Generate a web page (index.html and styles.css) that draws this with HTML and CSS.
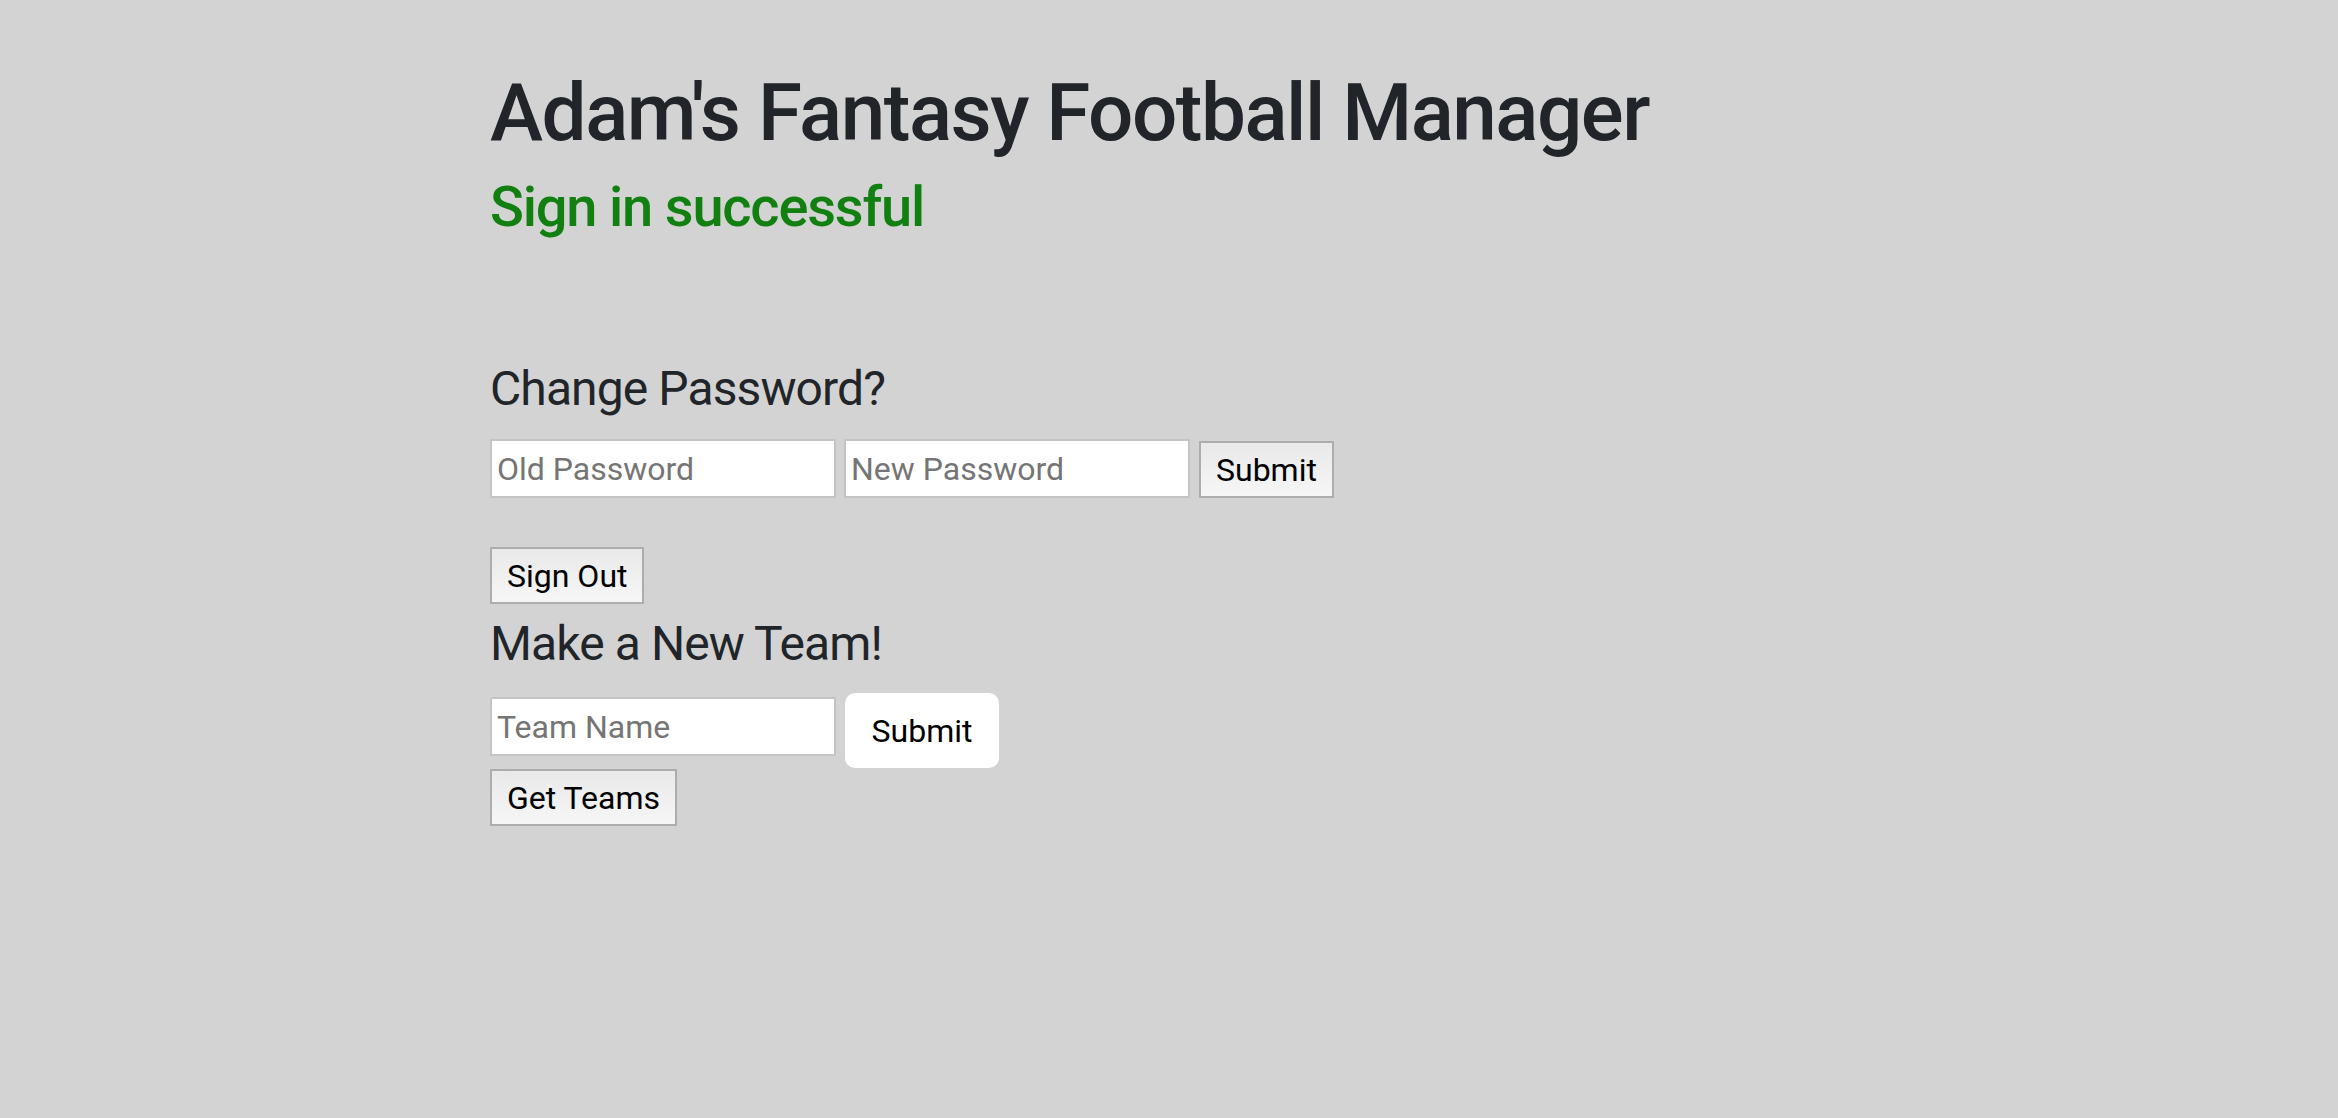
FILE: index.html
```html
<!DOCTYPE html>
<html lang="en">
<head>
<meta charset="utf-8">
<title>Adam's Fantasy Football Manager</title>
<link rel="stylesheet" href="styles.css">
</head>
<body>
<main class="page">
  <h1 class="title">Adam's Fantasy Football Manager</h1>
  <h3 class="status">Sign in successful</h3>

  <h4 class="section-title section-title--first">Change Password?</h4>
  <form class="row row--password">
    <input class="field" type="password" placeholder="Old Password">
    <input class="field" type="password" placeholder="New Password">
    <button class="btn" type="button">Submit</button>
  </form>

  <div class="signout-wrap">
    <button class="btn" type="button">Sign Out</button>
  </div>

  <h4 class="section-title section-title--team">Make a New Team!</h4>
  <form class="row row--team">
    <input class="field field--team" type="text" placeholder="Team Name">
    <button class="btn-white" type="button">Submit</button>
  </form>

  <div class="getteams-wrap">
    <button class="btn" type="button">Get Teams</button>
  </div>
</main>
</body>
</html>
```

FILE: styles.css
```css
html, body {
  margin: 0;
  padding: 0;
  background: #d3d3d3;
}

body {
  font-family: Roboto, "Noto Sans", "Liberation Sans", sans-serif;
  color: #212529;
  height: 1118px;
  overflow: hidden;
}

.page {
  padding: 65px 0 0 490px;
}

.title {
  margin: 0;
  font-size: 80px;
  line-height: 96px;
  font-weight: 500;
  letter-spacing: -1.5px;
}

.status {
  margin: 13px 0 0;
  font-size: 56px;
  line-height: 67px;
  font-weight: 500;
  color: #118011;
  letter-spacing: -1.2px;
}

.section-title {
  margin: 0;
  font-size: 48px;
  line-height: 58px;
  font-weight: 400;
  letter-spacing: -0.9px;
}

.section-title--first {
  margin-top: 119px;
}

.section-title--team {
  margin-top: 11px;
}

.row {
  display: flex;
  gap: 8px;
}

.row--password {
  margin-top: 21px;
  align-items: flex-end;
}

.row--team {
  margin-top: 20px;
  align-items: flex-start;
}

.field {
  box-sizing: border-box;
  width: 346px;
  height: 59px;
  margin: 0;
  padding: 0 5px;
  border: 2px solid #c4c4c4;
  background: #fff;
  font-family: inherit;
  font-size: 32px;
  color: #000;
  outline: none;
}

.field::placeholder {
  color: #757575;
}

.field--team {
  margin-top: 4px;
}

.btn {
  box-sizing: border-box;
  height: 57px;
  margin: 0;
  padding: 0 15px;
  border: 2px solid #adadad;
  background: linear-gradient(#e9e9e9, #f6f6f6);
  font-family: inherit;
  font-size: 32px;
  color: #000;
  display: inline-flex;
  align-items: center;
  cursor: pointer;
}

.row--password .btn {
  margin-left: 1px;
}

.btn-white {
  box-sizing: border-box;
  width: 154px;
  height: 75px;
  margin: 0 0 0 1px;
  padding: 0;
  border: none;
  border-radius: 10px;
  background: #fff;
  font-family: inherit;
  font-size: 32px;
  color: #000;
  cursor: pointer;
}

.signout-wrap {
  margin-top: 49px;
  display: flex;
}

.getteams-wrap {
  margin-top: 1px;
  display: flex;
}
```
